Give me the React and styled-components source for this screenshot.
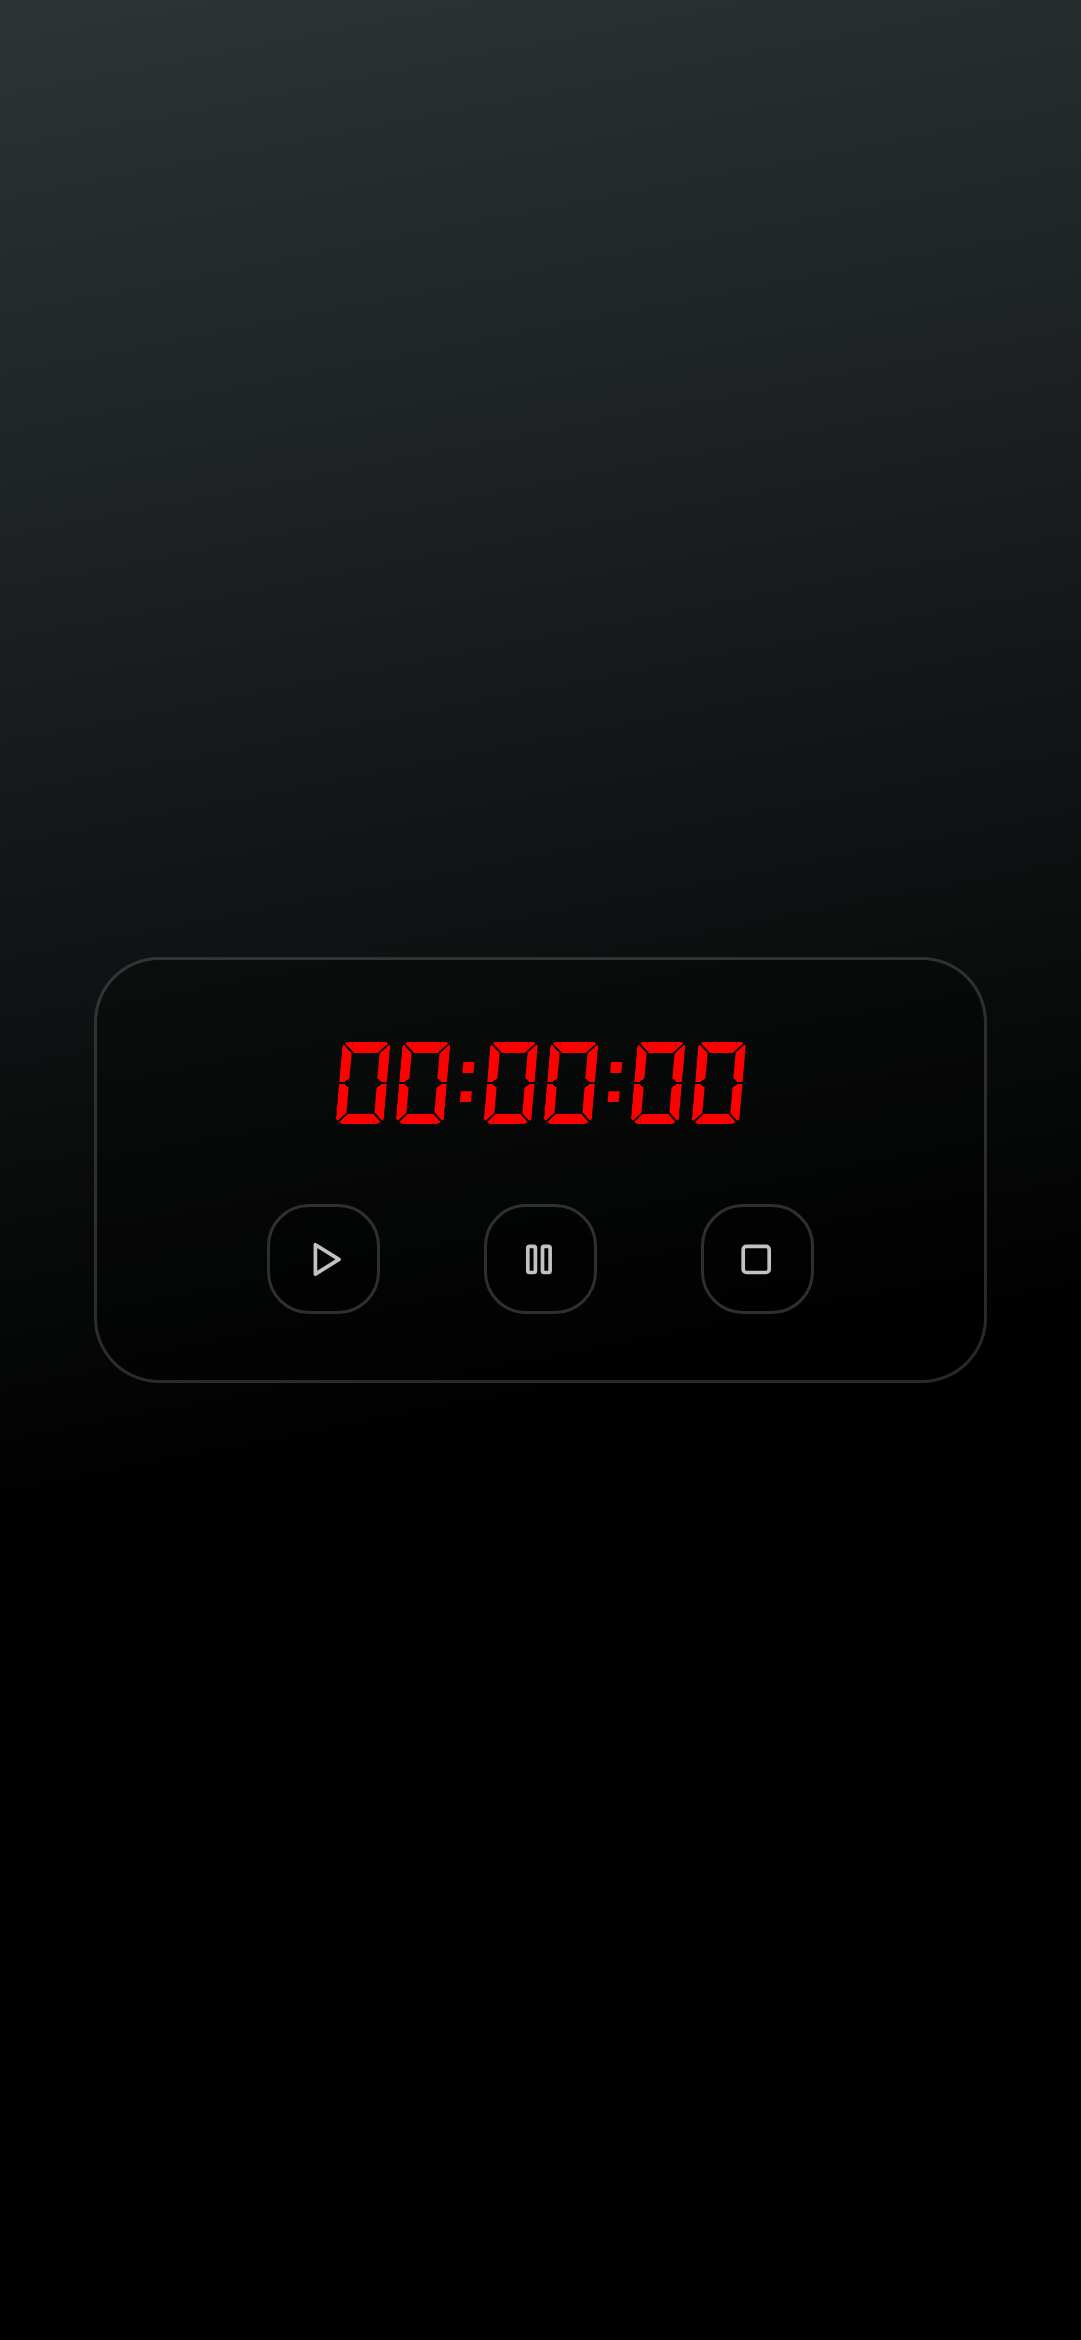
import React from "react";
import styled, { createGlobalStyle } from "styled-components";

const GlobalStyle = createGlobalStyle`
  *, *::before, *::after { box-sizing: border-box; }
  body { margin: 0; background: #000; }
`;

const Page = styled.main`
  min-height: 100vh;
  display: flex;
  align-items: center;
  justify-content: center;
  background: linear-gradient(169deg, #2d3436 0%, #000 60%);
`;

const Panel = styled.section`
  width: 893px;
  height: 426px;
  padding: 82px 0 66px;
  display: flex;
  flex-direction: column;
  align-items: center;
  justify-content: space-between;
  border: 3px solid rgba(255, 255, 255, 0.16);
  border-radius: 65px;
  background: rgba(0, 0, 0, 0.25);
`;

const Display = styled.div`
  display: flex;
  height: 82px;
  color: #f00;
  transform: skewX(-5deg);
`;

/* Keeps an even stroke, pointed on both sides of the centre line. */
const Digit = styled.span`
  width: 48px;
  height: 82px;
  margin: 0 6.17px;
  mask:
    conic-gradient(from 55deg at 3.5px 41px, transparent 70deg, #000 0) left / 10px 100% no-repeat,
    conic-gradient(from 235deg at calc(100% - 3.5px) 41px, transparent 70deg, #000 0) right / 10px 100% no-repeat,
    linear-gradient(#000, #000) center top / 28.4px 11px no-repeat,
    linear-gradient(#000, #000) center bottom / 28.4px 10.5px no-repeat;
`;

const band = "#000 16px, transparent 16.5px, transparent 18px, #000 18.5px";

/* Splits the strokes at the corners and across the middle. */
const Segments = styled.span`
  width: 48px;
  height: 82px;
  display: flex;
  align-items: center;
  justify-content: center;
  mask:
    linear-gradient(225deg, ${band}) left top / 24.5px 40px no-repeat,
    linear-gradient(135deg, ${band}) right top / 24.5px 40px no-repeat,
    linear-gradient(315deg, ${band}) left bottom / 24.5px 40px no-repeat,
    linear-gradient(45deg, ${band}) right bottom / 24.5px 40px no-repeat;
`;

const steps = [-7, -3.5, 0, 3.5, 7];
const spread = steps.flatMap((x) => steps.map((y) => `${x}px ${y}px #f00`)).join(", ");

const Glyph = styled.span`
  display: block;
  font: 500 100px/82px Roboto, sans-serif;
  text-shadow: ${spread};
  transform: translateY(1.4px);
`;

const Colon = styled.span`
  width: 27px;
  display: flex;
  justify-content: center;
  font: 700 79px/65px "Liberation Sans", sans-serif;
`;

const Controls = styled.div`
  display: flex;
  gap: 104px;
`;

const Button = styled.button`
  width: 113px;
  height: 110px;
  padding: 0;
  display: flex;
  align-items: center;
  justify-content: center;
  border: 3px solid #2e2f2f;
  border-radius: 42px;
  background: rgba(0, 0, 0, 0.3);
  color: #c2c2c2;
  cursor: pointer;
`;

const Icon = styled.svg`
  width: 48px;
  height: 48px;
  fill: none;
  stroke: currentColor;
  stroke-width: 3.7;
  stroke-linejoin: round;
`;

const time = "00:00:00";

export default function App() {
  return (
    <Page>
      <GlobalStyle />
      <Panel>
        <Display>
          {time.split("").map((c, i) =>
            c === ":" ? (
              <Colon key={i}>:</Colon>
            ) : (
              <Digit key={i}>
                <Segments><Glyph>{c}</Glyph></Segments>
              </Digit>
            )
          )}
        </Display>
        <Controls>
          <Button aria-label="Start">
            <Icon viewBox="0 0 48 48"><path d="M15.4 9.7 39 24.4 15.4 39.1Z" /></Icon>
          </Button>
          <Button aria-label="Pause">
            <Icon viewBox="0 0 48 48">
              <rect x="10.8" y="11.3" width="7.6" height="26.2" rx="1.7" />
              <rect x="25.5" y="11.3" width="7.6" height="26.2" rx="1.7" />
            </Icon>
          </Button>
          <Button aria-label="Stop">
            <Icon viewBox="0 0 48 48"><rect x="9.2" y="11.3" width="26" height="26.2" rx="3.2" /></Icon>
          </Button>
        </Controls>
      </Panel>
    </Page>
  );
}
